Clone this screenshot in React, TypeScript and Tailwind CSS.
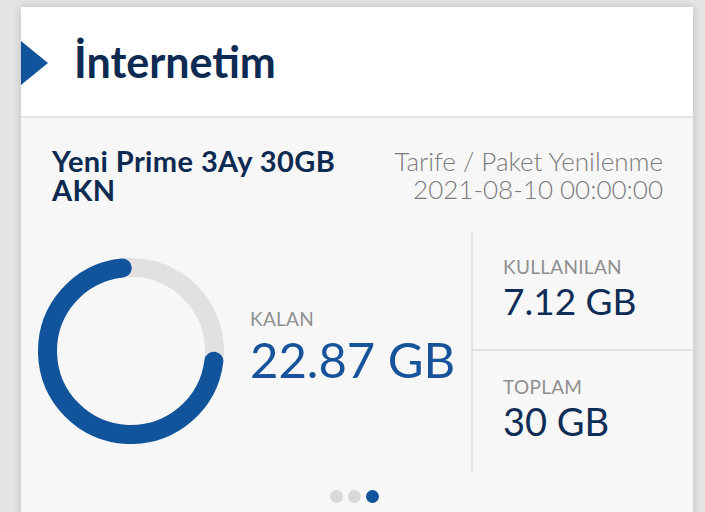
export default function App() {
  return (
    <div className="h-[512px] overflow-hidden bg-[#e4e4e4] pt-[7px] pl-[21px] pr-[12px] font-['Lato',sans-serif]">
      <div className="bg-white shadow-[0_0_8px_rgba(0,0,0,0.18)]">
        {/* header */}
        <div className="flex h-[111px] items-start border-b-2 border-[#e3e3e3]">
          <svg width="28" height="44" viewBox="0 0 28 44" className="mt-[34px]">
            <polygon points="0,0 27,22 0,44" fill="#12549b" />
          </svg>
          <h1 className="ml-[25px] mt-[33px] text-[43px] font-bold leading-none text-[#0c2a52]">İnternetim</h1>
        </div>

        <div className="bg-[#f7f7f7]">
          {/* package + renewal */}
          <div className="flex items-start justify-between pt-[28px] pl-[31px] pr-[30px]">
            <div className="text-[29px] font-bold leading-[29px] tracking-[0.4px] text-[#0c2a52]">
              Yeni Prime 3Ay 30GB
              <br />
              AKN
            </div>
            <div className="mt-[1px] text-right text-[26px] font-light leading-[28px] text-[#7a7a7a]">
              Tarife / Paket Yenilenme
              <br />
              2021-08-10 00:00:00
            </div>
          </div>

          {/* stats */}
          <div className="mt-[27px] flex h-[240px]">
            <div className="flex w-[450px] items-center pl-[17px]">
              <svg width="186" height="186" viewBox="0 0 186 186">
                <circle cx="93" cy="93" r="83.5" fill="none" stroke="#e1e1e1" strokeWidth="19" />
                <path
                  d="M84.27 9.96 A83.5 83.5 0 1 0 175.88 103.18"
                  fill="none"
                  stroke="#12549b"
                  strokeWidth="19"
                  strokeLinecap="round"
                />
              </svg>
              <div className="ml-[26px] pb-[11px]">
                <div className="text-[19px] leading-[20px] tracking-[0.3px] text-[#8f8f8f]">KALAN</div>
                <div className="mt-[6px] text-[49px] leading-[48px] text-[#17539a]">22.87 GB</div>
              </div>
            </div>
            <div className="flex w-[222px] flex-col border-l-2 border-[#e3e3e3]">
              <div className="h-[120px] border-b-2 border-[#e3e3e3] pt-[26px] pl-[30px]">
                <div className="text-[19px] leading-[20px] tracking-[0.3px] text-[#8f8f8f]">KULLANILAN</div>
                <div className="mt-[4px] text-[37px] leading-[40px] text-[#0f2d56]">7.12 GB</div>
              </div>
              <div className="flex-1 pt-[26px] pl-[30px]">
                <div className="text-[19px] leading-[20px] tracking-[0.3px] text-[#8f8f8f]">TOPLAM</div>
                <div className="mt-[4px] text-[38px] leading-[40px] text-[#0f2d56]">30 GB</div>
              </div>
            </div>
          </div>

          {/* pager dots */}
          <div className="flex justify-center gap-[5px] pt-[19px] pr-[6px] pb-[20px]">
            <span className="h-[13px] w-[13px] rounded-full bg-[#d9d9d9]" />
            <span className="h-[13px] w-[13px] rounded-full bg-[#d9d9d9]" />
            <span className="h-[13px] w-[13px] rounded-full bg-[#12549b]" />
          </div>
        </div>
      </div>
    </div>
  );
}
